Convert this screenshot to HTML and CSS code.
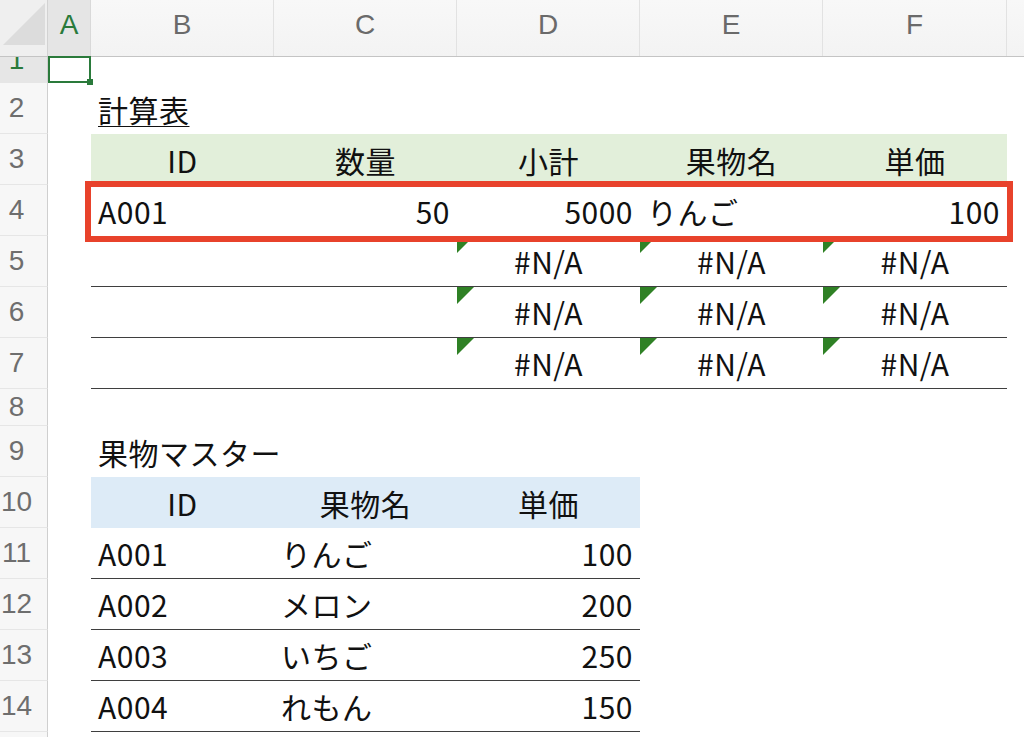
FILE: index.html
```html
<!DOCTYPE html>
<html lang="ja">
<head>
<meta charset="utf-8">
<title>計算表</title>
<link rel="stylesheet" href="styles.css">
</head>
<body>
<div class="sheet">
  <div class="row colhead">
    <div class="corner"><span class="corner-tri"></span></div>
    <div class="ch sel">A</div>
    <div class="ch">B</div>
    <div class="ch">C</div>
    <div class="ch">D</div>
    <div class="ch">E</div>
    <div class="ch">F</div>
    <div class="ch rest"></div>
  </div>

  <div class="row r1">
    <div class="rh sel"><span class="rh-cut">1</span></div>
    <div class="c active"><span class="handle"></span></div>
    <div class="c"></div><div class="c"></div><div class="c"></div><div class="c"></div><div class="c"></div><div class="c"></div>
  </div>

  <div class="row">
    <div class="rh">2</div>
    <div class="c"></div>
    <div class="c title"><u>計算表</u></div>
    <div class="c"></div><div class="c"></div><div class="c"></div><div class="c"></div><div class="c"></div>
  </div>

  <div class="row">
    <div class="rh">3</div>
    <div class="c"></div>
    <div class="c hg ctr">ID</div>
    <div class="c hg ctr">数量</div>
    <div class="c hg ctr">小計</div>
    <div class="c hg ctr">果物名</div>
    <div class="c hg ctr">単価</div>
    <div class="c"></div>
  </div>

  <div class="row">
    <div class="rh">4</div>
    <div class="c"></div>
    <div class="c">A001</div>
    <div class="c rt">50</div>
    <div class="c rt">5000</div>
    <div class="c">りんご</div>
    <div class="c rt">100</div>
    <div class="c"></div>
  </div>

  <div class="row">
    <div class="rh">5</div>
    <div class="c"></div>
    <div class="c bb"></div>
    <div class="c bb"></div>
    <div class="c bb err ctr">#N/A</div>
    <div class="c bb err ctr">#N/A</div>
    <div class="c bb err ctr">#N/A</div>
    <div class="c"></div>
  </div>

  <div class="row">
    <div class="rh">6</div>
    <div class="c"></div>
    <div class="c bb"></div>
    <div class="c bb"></div>
    <div class="c bb err ctr">#N/A</div>
    <div class="c bb err ctr">#N/A</div>
    <div class="c bb err ctr">#N/A</div>
    <div class="c"></div>
  </div>

  <div class="row">
    <div class="rh">7</div>
    <div class="c"></div>
    <div class="c bb"></div>
    <div class="c bb"></div>
    <div class="c bb err ctr">#N/A</div>
    <div class="c bb err ctr">#N/A</div>
    <div class="c bb err ctr">#N/A</div>
    <div class="c"></div>
  </div>

  <div class="row r8">
    <div class="rh">8</div>
    <div class="c"></div>
    <div class="c"></div><div class="c"></div><div class="c"></div><div class="c"></div><div class="c"></div>
    <div class="c"></div>
  </div>

  <div class="row">
    <div class="rh">9</div>
    <div class="c"></div>
    <div class="c title">果物マスター</div>
    <div class="c"></div><div class="c"></div><div class="c"></div><div class="c"></div><div class="c"></div>
  </div>

  <div class="row">
    <div class="rh">10</div>
    <div class="c"></div>
    <div class="c hb ctr">ID</div>
    <div class="c hb ctr">果物名</div>
    <div class="c hb ctr">単価</div>
    <div class="c"></div><div class="c"></div><div class="c"></div>
  </div>

  <div class="row">
    <div class="rh">11</div>
    <div class="c"></div>
    <div class="c bb">A001</div>
    <div class="c bb">りんご</div>
    <div class="c bb rt">100</div>
    <div class="c"></div><div class="c"></div><div class="c"></div>
  </div>

  <div class="row">
    <div class="rh">12</div>
    <div class="c"></div>
    <div class="c bb">A002</div>
    <div class="c bb">メロン</div>
    <div class="c bb rt">200</div>
    <div class="c"></div><div class="c"></div><div class="c"></div>
  </div>

  <div class="row">
    <div class="rh">13</div>
    <div class="c"></div>
    <div class="c bb">A003</div>
    <div class="c bb">いちご</div>
    <div class="c bb rt">250</div>
    <div class="c"></div><div class="c"></div><div class="c"></div>
  </div>

  <div class="row">
    <div class="rh">14</div>
    <div class="c"></div>
    <div class="c bb">A004</div>
    <div class="c bb">れもん</div>
    <div class="c bb rt">150</div>
    <div class="c"></div><div class="c"></div><div class="c"></div>
  </div>

  <div class="row r15">
    <div class="rh"></div>
    <div class="c"></div><div class="c"></div><div class="c"></div><div class="c"></div><div class="c"></div><div class="c"></div><div class="c"></div>
  </div>

  <div class="highlight"></div>
</div>
</body>
</html>
```

FILE: styles.css
```css
* { box-sizing: border-box; }

html, body {
  margin: 0;
  padding: 0;
  background: #ffffff;
  overflow: hidden;
}

.sheet {
  position: relative;
  width: 1024px;
  height: 737px;
  overflow: hidden;
  font-family: "Noto Sans CJK JP", "Noto Sans", sans-serif;
  color: #111;
}

.row {
  display: grid;
  grid-template-columns: 48px 43px 183px 183px 183px 183px 184px 1fr;
  height: 51px;
}

.colhead {
  height: 57px;
  border-bottom: 1px solid #c4c4c4;
  background: #f6f6f6;
}

.corner {
  position: relative;
  background: #efefef;
  border-right: 1px solid #d2d2d2;
}

.corner-tri {
  position: absolute;
  left: 3px;
  top: 3px;
  width: 42px;
  height: 42px;
  background: #dcdcdc;
  clip-path: polygon(100% 0, 100% 100%, 0 100%);
}

.ch {
  display: flex;
  align-items: center;
  justify-content: center;
  padding-bottom: 6px;
  font-family: "Liberation Sans", Arial, sans-serif;
  font-size: 28px;
  color: #6a6a6a;
  border-right: 1px solid #e2e2e2;
  background: linear-gradient(#f8f8f8, #f3f3f3);
}

.ch.sel {
  color: #2a7a3b;
  background: #e5e5e5;
  border-right-color: #d9d9d9;
}

.ch.rest {
  border-right: none;
}

.r1 { height: 26px; }
.r8 { height: 37px; }
.r15 { height: 20px; }

.rh {
  display: flex;
  align-items: center;
  justify-content: center;
  padding-right: 14px;
  font-family: "Liberation Sans", Arial, sans-serif;
  font-size: 28px;
  color: #6e6e6e;
  background: #f7f7f7;
  border-right: 1px solid #cfcfcf;
  border-bottom: 1px solid #e6e6e6;
}

.rh.sel {
  background: #e6e6e6;
  color: #2a7a3b;
  overflow: hidden;
  align-items: flex-end;
}

.rh-cut {
  display: block;
  line-height: 1;
  margin-bottom: 8px;
}

.c {
  position: relative;
  display: flex;
  align-items: center;
  padding: 0 7px;
  font-size: 30px;
  letter-spacing: 0.5px;
  white-space: nowrap;
}

.c.active {
  border: 2px solid #2a7a3b;
  margin-top: -1px;
}

.handle {
  position: absolute;
  right: -4px;
  bottom: -4px;
  width: 6px;
  height: 6px;
  background: #2a7a3b;
}

.title u {
  text-underline-offset: 4px;
  text-decoration-thickness: 1px;
}

.ctr { justify-content: center; }
.rt { justify-content: flex-end; }

.hg { background: #e2efda; }
.hb { background: #ddebf7; }

.bb { border-bottom: 1px solid #3f3f3f; }

.err::before {
  content: "";
  position: absolute;
  left: 0;
  top: 0;
  width: 17px;
  height: 17px;
  background: #2f8125;
  clip-path: polygon(0 0, 100% 0, 0 100%);
}

.highlight {
  position: absolute;
  left: 85px;
  top: 181px;
  width: 928px;
  height: 61px;
  border: 6px solid #e8422b;
}
```
